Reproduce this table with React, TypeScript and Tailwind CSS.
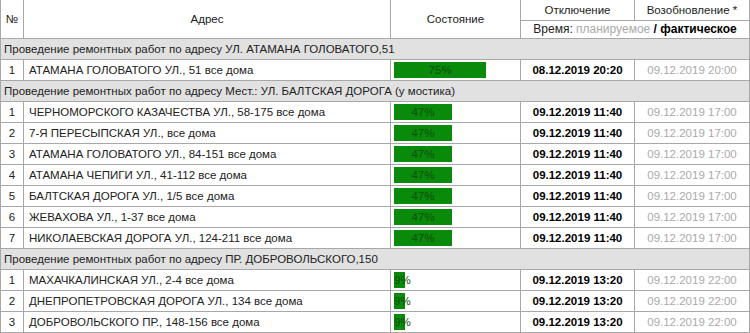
const groups = [
  {
    title: "Проведение ремонтных работ по адресу УЛ. АТАМАНА ГОЛОВАТОГО,51",
    rows: [
      { addr: "АТАМАНА ГОЛОВАТОГО УЛ., 51 все дома", pct: 75, off: "08.12.2019 20:20", on: "09.12.2019 20:00" },
    ],
  },
  {
    title: "Проведение ремонтных работ по адресу Мест.: УЛ. БАЛТСКАЯ ДОРОГА (у мостика)",
    rows: [
      { addr: "ЧЕРНОМОРСКОГО КАЗАЧЕСТВА УЛ., 58-175 все дома", pct: 47, off: "09.12.2019 11:40", on: "09.12.2019 17:00" },
      { addr: "7-Я ПЕРЕСЫПСКАЯ УЛ., все дома", pct: 47, off: "09.12.2019 11:40", on: "09.12.2019 17:00" },
      { addr: "АТАМАНА ГОЛОВАТОГО УЛ., 84-151 все дома", pct: 47, off: "09.12.2019 11:40", on: "09.12.2019 17:00" },
      { addr: "АТАМАНА ЧЕПИГИ УЛ., 41-112 все дома", pct: 47, off: "09.12.2019 11:40", on: "09.12.2019 17:00" },
      { addr: "БАЛТСКАЯ ДОРОГА УЛ., 1/5 все дома", pct: 47, off: "09.12.2019 11:40", on: "09.12.2019 17:00" },
      { addr: "ЖЕВАХОВА УЛ., 1-37 все дома", pct: 47, off: "09.12.2019 11:40", on: "09.12.2019 17:00" },
      { addr: "НИКОЛАЕВСКАЯ ДОРОГА УЛ., 124-211 все дома", pct: 47, off: "09.12.2019 11:40", on: "09.12.2019 17:00" },
    ],
  },
  {
    title: "Проведение ремонтных работ по адресу ПР. ДОБРОВОЛЬСКОГО,150",
    rows: [
      { addr: "МАХАЧКАЛИНСКАЯ УЛ., 2-4 все дома", pct: 9, off: "09.12.2019 13:20", on: "09.12.2019 22:00" },
      { addr: "ДНЕПРОПЕТРОВСКАЯ ДОРОГА УЛ., 134 все дома", pct: 9, off: "09.12.2019 13:20", on: "09.12.2019 22:00" },
      { addr: "ДОБРОВОЛЬСКОГО ПР., 148-156 все дома", pct: 9, off: "09.12.2019 13:20", on: "09.12.2019 22:00" },
    ],
  },
];

const cell = "border border-[#a8a8a8] h-[21px] p-0";

export default function App() {
  return (
    <div className="bg-white w-[750px] h-[333px] overflow-hidden font-['Liberation_Sans',Arial,sans-serif] text-[11.5px] text-[#222] leading-[14px]">
      <table className="w-[749px] table-fixed border-collapse">
        <colgroup>
          <col className="w-[23px]" />
          <col className="w-[367px]" />
          <col className="w-[130px]" />
          <col className="w-[114px]" />
          <col className="w-[115px]" />
        </colgroup>
        <thead>
          <tr>
            <th rowSpan={2} className="border border-t-0 border-[#a8a8a8] font-normal text-center">№</th>
            <th rowSpan={2} className="border border-t-0 border-[#a8a8a8] font-normal text-center">Адрес</th>
            <th rowSpan={2} className="border border-t-0 border-[#a8a8a8] font-normal text-center">Состояние</th>
            <th className="border border-t-0 border-[#a8a8a8] h-[20px] font-normal text-center">Отключение</th>
            <th className="border border-t-0 border-[#a8a8a8] h-[20px] font-normal text-center">Возобновление *</th>
          </tr>
          <tr>
            <th colSpan={2} className="border border-[#a8a8a8] h-[18px] font-normal text-center whitespace-nowrap text-[12px]">
              Время: <span className="text-[#aaa]">планируемое</span> <b className="text-black">/ фактическое</b>
            </th>
          </tr>
        </thead>
        <tbody>
          {groups.map((g) => (
            <>
              <tr key={g.title} className="bg-[#e1e1e1]">
                <td colSpan={5} className={`${cell} px-[3px] whitespace-nowrap`}>{g.title}</td>
              </tr>
              {g.rows.map((r, i) => (
                <tr key={g.title + r.addr}>
                  <td className={`${cell} text-center`}>{i + 1}</td>
                  <td className={`${cell} px-[5px] whitespace-nowrap`}>{r.addr}</td>
                  <td className={`${cell} px-[3px]`}>
                    <div
                      className="h-[16px] bg-[#0a8a0a] text-center text-[#0d4f0d] leading-[16px] whitespace-nowrap"
                      style={{ width: `${r.pct}%` }}
                    >
                      {r.pct}%
                    </div>
                  </td>
                  <td className={`${cell} text-center font-bold text-black`}>{r.off}</td>
                  <td className={`${cell} text-center text-[#aaa]`}>{r.on}</td>
                </tr>
              ))}
            </>
          ))}
        </tbody>
      </table>
    </div>
  );
}
